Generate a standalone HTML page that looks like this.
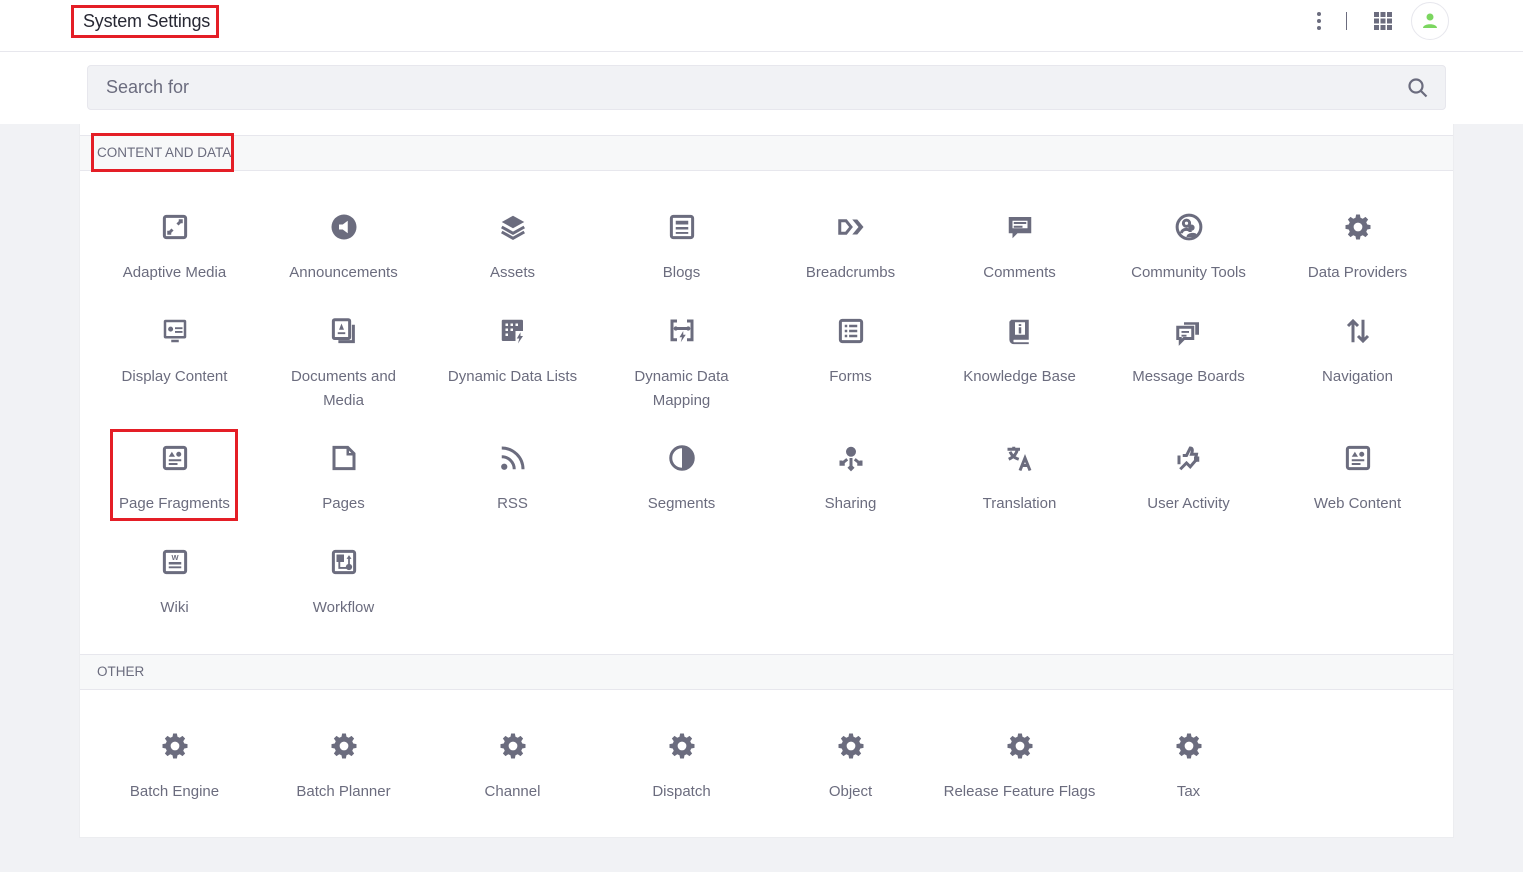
<!DOCTYPE html>
<html><head><meta charset="utf-8"><style>
*{margin:0;padding:0;box-sizing:border-box}
body{width:1523px;height:872px;background:#f1f2f5;font-family:"Liberation Sans",sans-serif;position:relative;overflow:hidden}
.top{position:absolute;left:0;top:0;width:1523px;height:124px;background:#fff}
.hdr{position:absolute;left:0;top:51px;width:1523px;height:1px;background:#e7e7ed}
.title{position:absolute;left:71px;top:5px;width:148px;height:33px;border:3px solid #e41e26;font-size:18px;color:#272833;padding:3px 0 0 9px;letter-spacing:-0.2px}
.search{position:absolute;left:87px;top:65px;width:1359px;height:45px;background:#f1f2f5;border:1px solid #e7e7ed;border-radius:4px;font-size:18px;color:#6b6c7e;padding:11px 0 0 18px}
.card{position:absolute;left:79px;top:124px;width:1375px;height:714px;background:#fff;border:1px solid #ecedf0;border-top:none}
.sec{position:absolute;left:0;width:1373px;height:36px;background:#f7f8f9;border-top:1px solid #e7e7ed;border-bottom:1px solid #e7e7ed;font-size:13.5px;color:#6b6c7e;padding:9px 0 0 17px}
.it{position:absolute;width:169px;text-align:center;font-size:15px;color:#6b6c7e;line-height:24px}
.it svg{display:block;margin:0 auto 19px;width:30px;height:30px}
.red{position:absolute;border:3px solid #e41e26}
</style></head><body>
<div class="top"></div><div class="hdr"></div>
<div class="title">System Settings</div>
<svg style="position:absolute;left:1312px;top:10px" width="14" height="24"><circle cx="7" cy="4" r="2" fill="#6b6c7e"/><circle cx="7" cy="11" r="2" fill="#6b6c7e"/><circle cx="7" cy="18" r="2" fill="#6b6c7e"/></svg>
<div style="position:absolute;left:1346px;top:12px;width:1px;height:18px;background:#6b6c7e"></div>
<svg style="position:absolute;left:1373px;top:11px" width="20" height="20" fill="#6b6c7e"><rect x="1" y="1" width="5" height="5"/><rect x="7.5" y="1" width="5" height="5"/><rect x="14" y="1" width="5" height="5"/><rect x="1" y="7.5" width="5" height="5"/><rect x="7.5" y="7.5" width="5" height="5"/><rect x="14" y="7.5" width="5" height="5"/><rect x="1" y="14" width="5" height="5"/><rect x="7.5" y="14" width="5" height="5"/><rect x="14" y="14" width="5" height="5"/></svg>
<svg style="position:absolute;left:1411px;top:2px" width="38" height="38"><circle cx="19" cy="19" r="18.5" fill="#fff" stroke="#e7e7ed"/><circle cx="19" cy="15" r="3.5" fill="#7bd65f"/><path d="M12 26c0-5 14-5 14 0z" fill="#7bd65f"/></svg>
<div class="search">Search for</div>
<svg style="position:absolute;left:1407px;top:77px" width="22" height="22" fill="none" stroke="#6b6c7e" stroke-width="2.2"><circle cx="9" cy="9" r="6.5"/><path d="M14 14l5.5 5.5"/></svg>
<div class="card">
<div class="sec" style="top:11px">CONTENT AND DATA</div>
<div class="sec" style="top:530px">OTHER</div>
</div>
<div class="red" style="left:91px;top:133px;width:143px;height:39px"></div>
<div class="red" style="left:110px;top:429px;width:128px;height:92px"></div>
<div id="g"></div>
<script>
const F='fill="#6b6c7e"',S='fill="none" stroke="#6b6c7e" stroke-width="2.4"';
const gear=`<path ${F} d="M10.5 2h3l.5 2.6 1.8.8 2.2-1.5 2.1 2.1-1.5 2.2.8 1.8 2.6.5v3l-2.6.5-.8 1.8 1.5 2.2-2.1 2.1-2.2-1.5-1.8.8-.5 2.6h-3l-.5-2.6-1.8-.8-2.2 1.5-2.1-2.1 1.5-2.2-.8-1.8L2 13.5v-3l2.6-.5.8-1.8-1.5-2.2 2.1-2.1 2.2 1.5 1.8-.8zM12 8.5a3.5 3.5 0 100 7 3.5 3.5 0 000-7z"/>`;
const frame=`<rect x="3.5" y="3.5" width="17" height="17" rx="1.5" ${S}/>`;
const I={
am:frame+`<path ${S} stroke-width="1.6" d="M14 10l3-3M15 7h2v2M10 14l-3 3M7 15v2h2"/>`,
an:`<circle cx="12" cy="12" r="10" ${F}/><path fill="#fff" d="M8 10h3l4-3v10l-4-3H8z"/>`,
as:`<path ${F} d="M12 3l9 5-9 5-9-5z"/><path ${S} stroke-width="1.8" d="M3 12l9 5 9-5M3 16l9 5 9-5"/>`,
bl:frame+`<path ${F} d="M7 7h10v3H7zM7 12h10v2H7zM7 16h10v1.5H7z"/>`,
br:`<path ${S} stroke-width="2" d="M3 7h5l4 5-4 5H3z"/><path ${F} d="M13 6h4l5 6-5 6h-4l5-6z"/>`,
co:`<path ${F} d="M3 4h18v13H10l-4 4v-4H3z"/><path fill="#fff" d="M6 7h12v6H6z"/><path ${F} d="M7 8h10v1.6H7zM7 11h7v1.6H7z"/>`,
ct:`<circle cx="12" cy="12" r="9.5" ${S} stroke-width="2"/><circle cx="10" cy="9" r="2.5" ${S} stroke-width="1.6"/><path ${F} d="M14 10a2.5 2.5 0 110 5 2.5 2.5 0 110-5zM10 20c0-4 8-4 8-2v2z"/><path ${S} stroke-width="1.6" d="M6 17c0-4 7-4 7-1"/>`,
gear:gear,
dc:`<rect x="3" y="3" width="18" height="15" rx="1.5" ${F}/><path fill="#fff" d="M5 5h14v11H5z"/><circle cx="8.5" cy="10.5" r="2" ${F}/><path ${F} d="M12 9h6v1.5h-6zM12 12h6v1.5h-6zM9 19h6v2H9z"/>`,
dm:`<rect x="3.5" y="3" width="13" height="15" rx="1" ${S}/><path ${S} d="M19.5 7v13.5h-12"/><path ${F} d="M7 13h6v1.5H7zM8 11l2-5 2 5z"/>`,
ddl:`<rect x="3" y="3" width="17" height="17" rx="1" ${F}/><path fill="#fff" d="M6 6h2v2H6zM10 6h2v2h-2zM14 6h2v2h-2zM6 10h2v2H6zM10 10h2v2h-2zM6 14h2v2H6zM14 12h8v10h-8z"/><path ${F} d="M18 13l-3 5h2l-1 4 4-6h-2z"/>`,
ddm:`<path ${S} d="M8 4H4v15h4M16 4h4v15h-4"/><path ${S} stroke-width="1.6" d="M7 10h10"/><circle cx="7" cy="10" r="1.7" ${F}/><circle cx="17" cy="10" r="1.7" ${F}/><path ${F} d="M13 12l-3 5h2l-1 4 4-6h-2z"/>`,
fo:frame+`<path ${F} d="M7 7h2v2H7zM10.5 7h6.5v2h-6.5zM7 11h2v2H7zM10.5 11h6.5v2h-6.5zM7 15h2v2H7zM10.5 15h6.5v2h-6.5z"/>`,
kb:`<path ${F} d="M5 3h14v16H7a2 2 0 000 2h12v1.5H7A3.5 3.5 0 013.5 19V4.5z"/><path fill="#fff" d="M8 5h8v10H8z"/><path ${F} d="M11 9h2v5h-2zM11 6.5h2v1.5h-2z"/>`,
mb:`<path ${S} stroke-width="2" d="M3 9h12v9H8l-3 3v-3H3z"/><path ${F} d="M8 5h12v10h-3V7H8z"/><path ${F} d="M6 12h6v1.5H6zM6 15h4v1.5H6z"/>`,
na:`<path ${S} d="M8 21V4M4 8l4-4 4 4M16 3v17M12 16l4 4 4-4"/>`,
pf:frame+`<path ${F} d="M7 11l2.5-4 2.5 4z"/><circle cx="15" cy="9" r="2" ${F}/><path ${F} d="M7 13h10v1.6H7zM7 16h7v1.6H7z"/>`,
pg:`<path ${S} d="M4 3.5h11l5 5v12H4z"/><path ${F} d="M14 3h2v5h5v2h-7z"/>`,
rs:`<circle cx="5" cy="19" r="2.5" ${F}/><path ${S} stroke-width="3" d="M3 11a10 10 0 0110 10M3 4a17 17 0 0117 17"/>`,
se:`<circle cx="12" cy="12" r="9" ${S}/><path ${F} d="M12 3a9 9 0 010 18z"/>`,
sh:`<circle cx="12" cy="7" r="4" ${F}/><path ${S} stroke-width="1.6" d="M12 12v9M10 19l2 2 2-2M9 13l-5 4M4 14v3h3M15 13l5 4M20 14v3h-3"/>`,
tr:`<path ${S} stroke-width="1.7" d="M2 5h10M7 3v2M4 7c2 4 4 5 7 6M10 5c-1 4-3 6-7 8"/><path ${S} stroke-width="2" d="M12 22l4-10 4 10M13.5 18h5"/>`,
ua:`<path ${S} stroke-width="1.8" d="M4 10v7M7 10h3l3-6c2 0 2 2 1 5h4l-1 6"/><path ${S} stroke-width="2.4" d="M5 21l5-5 3 3 6-7M16 12h3v3"/>`,
wi:frame+`<path ${F} d="M7 12h10v2H7zM7 15.5h10v1.5H7z"/><text x="12" y="10.5" font-size="6" font-weight="bold" text-anchor="middle" fill="#6b6c7e" font-family="Liberation Sans">W</text>`,
wf:frame+`<path ${F} d="M6 6h6v6H6zM9 12v4h5v1.5H7.5V12z"/><circle cx="16" cy="16" r="2.5" ${F}/><path ${F} d="M15.3 14V9h1.4v5zM14 9.5l2-3 2 3z"/>`
};
const rows=[
[227,[['am','Adaptive Media'],['an','Announcements'],['as','Assets'],['bl','Blogs'],['br','Breadcrumbs'],['co','Comments'],['ct','Community Tools'],['gear','Data Providers']]],
[331,[['dc','Display Content'],['dm','Documents and<br>Media'],['ddl','Dynamic Data Lists'],['ddm','Dynamic Data<br>Mapping'],['fo','Forms'],['kb','Knowledge Base'],['mb','Message Boards'],['na','Navigation']]],
[458,[['pf','Page Fragments'],['pg','Pages'],['rs','RSS'],['se','Segments'],['sh','Sharing'],['tr','Translation'],['ua','User Activity'],['pf','Web Content']]],
[562,[['wi','Wiki'],['wf','Workflow']]],
[746,[['gear','Batch Engine'],['gear','Batch Planner'],['gear','Channel'],['gear','Dispatch'],['gear','Object'],['gear','Release Feature Flags'],['gear','Tax']]]];
let h='';
rows.forEach(([y,its])=>its.forEach(([ic,t],i)=>{
h+=`<div class="it" style="left:${90+i*169}px;top:${y-15}px"><svg viewBox="0 0 24 24">${I[ic]}</svg>${t}</div>`;}));
document.getElementById('g').innerHTML=h;
</script>
</body></html>
